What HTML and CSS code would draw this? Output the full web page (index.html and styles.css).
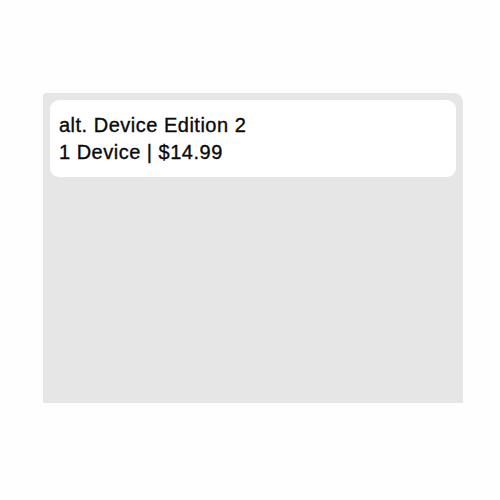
FILE: index.html
```html
<!DOCTYPE html>
<html>
<head>
<meta charset="utf-8">
<link rel="stylesheet" href="styles.css">
</head>
<body>
<div class="panel">
  <div class="card">
    <div class="line">alt. Device Edition 2</div>
    <div class="line">1 Device | $14.99</div>
  </div>
</div>
</body>
</html>
```
FILE: styles.css
```css
html, body {
  margin: 0;
  padding: 0;
  background: #fefefe;
}
body {
  padding: 93px 0 0 43px;
  font-family: "Liberation Sans", Arial, sans-serif;
}
.panel {
  width: 420px;
  height: 310px;
  background: #e6e6e6;
  border-radius: 3px 9px 0 0;
  padding: 7px;
  box-sizing: border-box;
}
.card {
  background: #ffffff;
  border-radius: 9px;
  height: 77px;
  box-sizing: border-box;
  padding: 12px 9px 0 9px;
}
.line {
  font-size: 20px;
  line-height: 27px;
  letter-spacing: 0.5px;
  color: #0a0a0a;
  -webkit-text-stroke: 0.35px #0a0a0a;
}
```
